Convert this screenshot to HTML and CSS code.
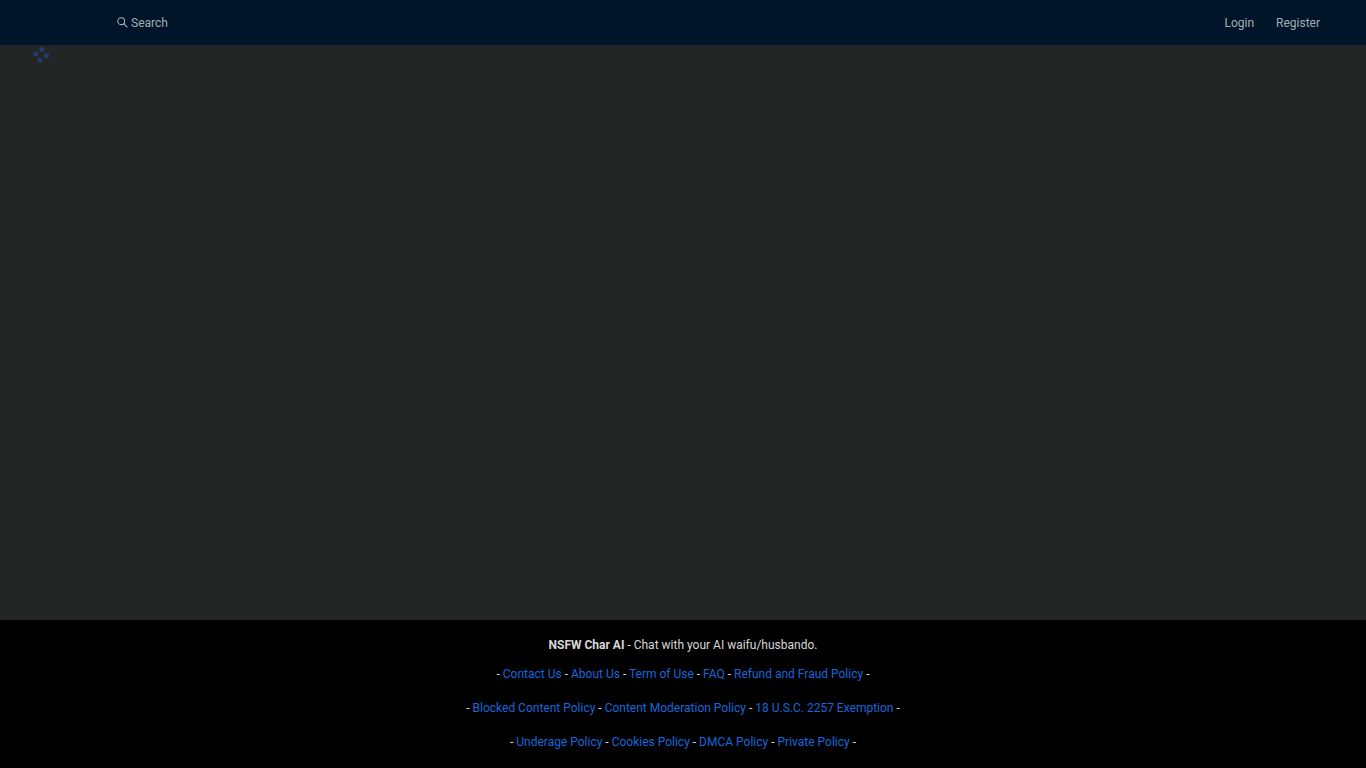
FILE: index.html
```html
<!DOCTYPE html>
<html lang="en">
<head>
  <meta charset="UTF-8">
  <meta name="viewport" content="width=device-width, initial-scale=1.0">
  <title>NSFW Char AI</title>
  <link rel="stylesheet" href="styles.css">
</head>
<body>
  <!-- Top navigation -->
  <header class="header">
    <a class="nav-link" href="#search">
      <svg class="icon" viewBox="0 0 11 11" fill="none" stroke="currentColor" stroke-width="1.100" aria-hidden="true">
        <circle cx="4.200" cy="4.200" r="3.400"/>
        <path d="M6.700 6.700L10.400 10.400"/>
      </svg>
      <span>Search</span>
    </a>
    <nav class="account">
      <a class="nav-link" href="#login">Login</a>
      <a class="nav-link" href="#register">Register</a>
    </nav>
  </header>

  <!-- Page content, still loading -->
  <main class="content">
    <svg class="spinner" viewBox="0 0 20 20" role="img" aria-label="Loading">
      <circle cx="11" cy="4.500" r="2.600"/>
      <circle cx="15.500" cy="10.700" r="2.600"/>
      <circle cx="9" cy="15.300" r="2.600"/>
      <circle cx="4.700" cy="8.800" r="2.600"/>
    </svg>
  </main>

  <!-- Footer -->
  <footer class="footer">
    <p class="tagline"><strong>NSFW Char AI</strong> - Chat with your AI waifu/husbando.</p>
    <p class="links">- <a href="#contact">Contact Us</a> - <a href="#about">About Us</a> - <a href="#terms">Term of Use</a> - <a href="#faq">FAQ</a> - <a href="#refund">Refund and Fraud Policy</a> -</p>
    <p class="links">- <a href="#blocked">Blocked Content Policy</a> - <a href="#moderation">Content Moderation Policy</a> - <a href="#exemption">18 U.S.C. 2257 Exemption</a> -</p>
    <p class="links">- <a href="#underage">Underage Policy</a> - <a href="#cookies">Cookies Policy</a> - <a href="#dmca">DMCA Policy</a> - <a href="#private">Private Policy</a> -</p>
  </footer>
</body>
</html>
```
FILE: styles.css
```css
* {
  box-sizing: border-box;
}

body {
  margin: 0;
  min-height: 100vh;
  display: flex;
  flex-direction: column;
  background-color: #242625;
  color: rgba(255, 255, 255, 0.85);
  font-family: Roboto, Arial, sans-serif;
  font-size: 12px;
  line-height: 18px;
}

a {
  color: #1668dc;
  text-decoration: none;
}

/* Top navigation */
.header {
  display: flex;
  justify-content: space-between;
  align-items: center;
  height: 45px;
  padding: 0 46px 0 117px;
  background-color: #001529;
}

.account {
  display: flex;
  gap: 22px;
}

.nav-link {
  display: flex;
  align-items: center;
  gap: 3px;
  color: rgba(255, 255, 255, 0.65);
}

.icon {
  width: 11px;
  height: 11px;
}

/* Content */
.content {
  flex: 1;
  padding: 0 31px;
}

.spinner {
  display: block;
  width: 20px;
  height: 20px;
  fill: #213c67;
}

/* Footer */
.footer {
  padding: 16px 46px;
  background-color: #000;
  text-align: center;
}

.tagline {
  margin: 0 0 11px;
}

.links {
  margin: 0 0 16px;
}
.links:last-child {
  margin-bottom: 1px;
}
```
